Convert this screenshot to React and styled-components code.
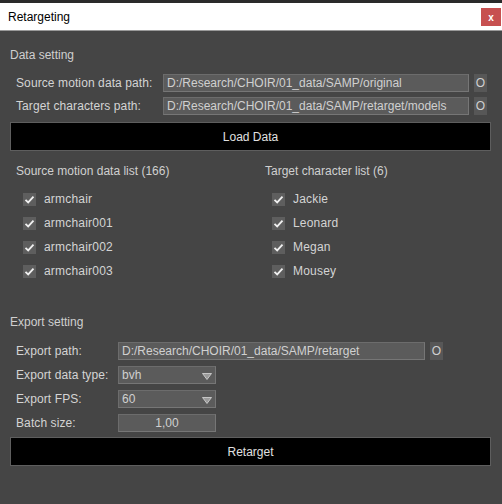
import styled, { createGlobalStyle } from 'styled-components'

const GlobalStyle = createGlobalStyle`
    html, body {
        margin: 0;
        padding: 0;
        background: #454545;
    }
    * {
        box-sizing: border-box;
    }
`

const Window = styled.div`
    display: flex;
    flex-direction: column;
    width: 502px;
    height: 504px;
    background: #454545;
    font-family: 'Liberation Sans', Arial, sans-serif;
    font-size: 12px;
    color: #d2d2d2;
    overflow: hidden;
`

const TopStrip = styled.div`
    height: 3px;
    background: #2a2a2a;
`

const TitleBar = styled.div`
    display: flex;
    align-items: center;
    justify-content: space-between;
    height: 28px;
    padding: 0 1px 0 8px;
    background: #ffffff;
    border-bottom: 1px solid #9a9a9a;
    color: #000;
    font-size: 12px;
`

const CloseButton = styled.div`
    display: flex;
    align-items: center;
    justify-content: center;
    width: 20px;
    height: 18px;
    margin-top: 1px;
    background: #c75050;
    color: #fff;
    font-size: 10px;
    font-weight: bold;
`

const Body = styled.div`
    display: flex;
    flex-direction: column;
    flex: 1;
    padding: 16px 11px 0 10px;
`

const SectionTitle = styled.div`
    height: 16px;
    line-height: 16px;
    margin-top: ${({ top }) => top || 0}px;
    color: #cfcfcf;
`

const FormRows = styled.div`
    display: flex;
    flex-direction: column;
    gap: ${({ gap }) => gap}px;
    margin-top: ${({ top }) => top}px;
    padding-left: 6px;
`

const Row = styled.div`
    display: grid;
    grid-template-columns: ${({ labelWidth }) => labelWidth}px auto auto;
    align-items: center;
    justify-content: start;
    column-gap: 5px;
    height: 18px;
`

const Label = styled.span`
    white-space: nowrap;
    color: #d4d4d4;
    letter-spacing: 0.1px;
`

const Field = styled.div`
    display: flex;
    align-items: center;
    justify-content: ${({ center }) => (center ? 'center' : 'space-between')};
    width: ${({ width }) => width}px;
    height: 18px;
    padding: 0 3px;
    margin-left: -5px;
    background: #5b5b5b;
    border: 1px solid #6c6c6c;
    border-right-color: #767676;
    border-bottom-color: #767676;
    color: #d0d0d0;
    white-space: nowrap;
    overflow: hidden;
`

const SmallButton = styled.div`
    display: flex;
    align-items: center;
    justify-content: center;
    width: 13px;
    height: 18px;
    background: #575757;
    color: #d0d0d0;
`

const BigButton = styled.div`
    display: flex;
    align-items: center;
    justify-content: center;
    height: 29px;
    margin-top: ${({ top }) => top}px;
    background: #000;
    border: 1px solid #5e5e5e;
    color: #e0e0e0;
`

const Lists = styled.div`
    display: grid;
    grid-template-columns: 249px 1fr;
    margin-top: 12px;
    padding-left: 6px;
`

const ListColumn = styled.div`
    display: flex;
    flex-direction: column;
`

const ListHeader = styled.div`
    height: 16px;
    line-height: 16px;
    margin-bottom: 8px;
    color: #d0d0d0;
`

const CheckRow = styled.div`
    display: flex;
    align-items: center;
    gap: 8px;
    height: 24px;
    padding-left: 7px;
    color: #d4d4d4;
    font-size: 12px;
    letter-spacing: 0.2px;
`

const Box = styled.div`
    display: flex;
    align-items: center;
    justify-content: center;
    width: 13px;
    height: 13px;
    background: #5e5e5e;
`

const Arrow = styled.svg`
    width: 10px;
    height: 7px;
    margin-top: 3px;
`

function Check() {
    return (
        <Box>
            <svg width="11" height="11" viewBox="0 0 11 11">
                <path d="M1.5 5.8 L4.2 8.4 L9.5 2.6" fill="none" stroke="#f0f0f0" strokeWidth="1.8" />
            </svg>
        </Box>
    )
}

function DropArrow() {
    return (
        <Arrow viewBox="0 0 10 7">
            <path d="M0.5 0.5 L9.5 0.5 L5 6.5 Z" fill="#9a9a9a" stroke="#d8d8d8" strokeWidth="0.8" />
        </Arrow>
    )
}

const sources = ['armchair', 'armchair001', 'armchair002', 'armchair003']
const targets = ['Jackie', 'Leonard', 'Megan', 'Mousey']

export default function App() {
    return (
        <Window>
            <GlobalStyle />
            <TopStrip />
            <TitleBar>
                <span>Retargeting</span>
                <CloseButton>x</CloseButton>
            </TitleBar>
            <Body>
                <SectionTitle>Data setting</SectionTitle>
                <FormRows gap={5} top={11}>
                    <Row labelWidth={147}>
                        <Label>Source motion data path:</Label>
                        <Field width={306}>D:/Research/CHOIR/01_data/SAMP/original</Field>
                        <SmallButton>O</SmallButton>
                    </Row>
                    <Row labelWidth={147}>
                        <Label>Target characters path:</Label>
                        <Field width={306}>D:/Research/CHOIR/01_data/SAMP/retarget/models</Field>
                        <SmallButton>O</SmallButton>
                    </Row>
                </FormRows>
                <BigButton top={7}>Load Data</BigButton>

                <Lists>
                    <ListColumn>
                        <ListHeader>Source motion data list (166)</ListHeader>
                        {sources.map((s) => (
                            <CheckRow key={s}>
                                <Check />
                                {s}
                            </CheckRow>
                        ))}
                    </ListColumn>
                    <ListColumn>
                        <ListHeader>Target character list (6)</ListHeader>
                        {targets.map((t) => (
                            <CheckRow key={t}>
                                <Check />
                                {t}
                            </CheckRow>
                        ))}
                    </ListColumn>
                </Lists>

                <SectionTitle top={31}>Export setting</SectionTitle>
                <FormRows gap={6} top={12}>
                    <Row labelWidth={102}>
                        <Label>Export path:</Label>
                        <Field width={307}>D:/Research/CHOIR/01_data/SAMP/retarget</Field>
                        <SmallButton>O</SmallButton>
                    </Row>
                    <Row labelWidth={102}>
                        <Label>Export data type:</Label>
                        <Field width={98}>
                            bvh
                            <DropArrow />
                        </Field>
                    </Row>
                    <Row labelWidth={102}>
                        <Label>Export FPS:</Label>
                        <Field width={98}>
                            60
                            <DropArrow />
                        </Field>
                    </Row>
                    <Row labelWidth={102}>
                        <Label>Batch size:</Label>
                        <Field width={98} center>
                            1,00
                        </Field>
                    </Row>
                </FormRows>
                <BigButton top={5}>Retarget</BigButton>
            </Body>
        </Window>
    )
}
